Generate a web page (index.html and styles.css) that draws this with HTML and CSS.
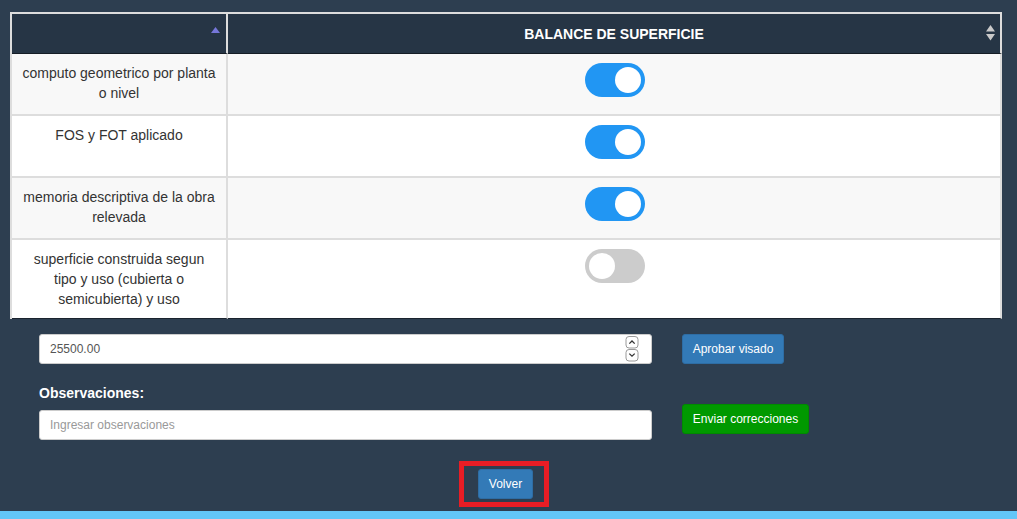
FILE: index.html
```html
<!DOCTYPE html>
<html lang="es">
<head>
<meta charset="utf-8">
<title>Balance de superficie</title>
<link rel="stylesheet" href="styles.css">
</head>
<body>
<div class="page">
  <main class="main">
    <table class="grid">
      <thead>
        <tr>
          <th class="col-item">
            <svg class="sort sort-asc" width="9" height="6" viewBox="0 0 9 6"><path d="M4.5 0 L9 6 L0 6 Z" fill="#7677d9"/></svg>
          </th>
          <th class="col-check">BALANCE DE SUPERFICIE
            <svg class="sort sort-both" width="9" height="16" viewBox="0 0 9 16"><path d="M4.5 0 L9 6.5 L0 6.5 Z M0 9 L9 9 L4.5 15.5 Z" fill="#c9c9c9"/></svg>
          </th>
        </tr>
      </thead>
      <tbody>
        <tr class="odd">
          <td class="item">computo geometrico por planta o nivel</td>
          <td class="check"><label class="switch"><input type="checkbox" checked><span class="slider"></span></label></td>
        </tr>
        <tr>
          <td class="item">FOS y FOT aplicado</td>
          <td class="check"><label class="switch"><input type="checkbox" checked><span class="slider"></span></label></td>
        </tr>
        <tr class="odd">
          <td class="item">memoria descriptiva de la obra relevada</td>
          <td class="check"><label class="switch"><input type="checkbox" checked><span class="slider"></span></label></td>
        </tr>
        <tr class="last">
          <td class="item">superficie construida segun tipo y uso (cubierta o semicubierta) y uso</td>
          <td class="check"><label class="switch"><input type="checkbox"><span class="slider"></span></label></td>
        </tr>
      </tbody>
    </table>

    <div class="form">
      <div class="form-row">
        <div class="field number-field">
          <input class="plain" type="text" value="25500.00">
          <svg class="spinner" width="14" height="26" viewBox="0 0 14 26">
            <rect x="1" y="0.5" width="12" height="11.5" rx="3" fill="#fff" stroke="#9a9a9a"/>
            <path d="M4.3 7.6 L7 5 L9.7 7.6" fill="none" stroke="#333" stroke-width="1.3"/>
            <rect x="1" y="13.5" width="12" height="11.5" rx="3" fill="#fff" stroke="#9a9a9a"/>
            <path d="M4.3 17.6 L7 20.2 L9.7 17.6" fill="none" stroke="#333" stroke-width="1.3"/>
          </svg>
        </div>
        <button class="btn btn-blue btn-approve" type="button">Aprobar visado</button>
      </div>
      <div class="form-row second">
        <div class="obs">
          <label class="obs-label" for="obs">Observaciones:</label>
          <input id="obs" class="field text-field" type="text" placeholder="Ingresar observaciones">
        </div>
        <button class="btn btn-green btn-send" type="button">Enviar correcciones</button>
      </div>
    </div>

    <div class="back">
      <div class="highlight">
        <button class="btn btn-blue btn-back" type="button">Volver</button>
      </div>
    </div>
  </main>
  <div class="footer-bar"></div>
</div>
</body>
</html>
```

FILE: styles.css
```css
* { box-sizing: border-box; }

html, body {
  margin: 0;
  padding: 0;
}

body {
  background: #2d3e50;
  font-family: "Liberation Sans", Arial, sans-serif;
  font-size: 14px;
  color: #333;
}

.page {
  height: 519px;
  display: flex;
  flex-direction: column;
  overflow: hidden;
}

.main {
  flex: 1;
}

/* ---------- table ---------- */
.grid {
  margin: 12px 0 0 10px;
  width: 992px;
  border-collapse: separate;
  border-spacing: 0;
  border-top: 2px solid #dddddd;
  border-left: 2px solid #dddddd;
  table-layout: fixed;
}

.grid th {
  position: relative;
  height: 40px;
  background: #263545;
  color: #fff;
  font-weight: bold;
  font-size: 14px;
  text-align: center;
  padding: 0 8px;
  border-right: 2px solid #dddddd;
  border-bottom: 1px solid #151d26;
}

.grid .col-item { width: 216px; }

.sort {
  position: absolute;
  display: block;
}
.sort-asc { right: 6px; top: 13px; }
.sort-both { right: 5px; top: 11px; }

.grid td {
  background: #fff;
  padding: 9px 9px 9px;
  line-height: 20px;
  text-align: center;
  vertical-align: top;
  border-right: 2px solid #dddddd;
  border-bottom: 2px solid #dddddd;
}

.grid tr.odd td { background: #f8f8f8; }
.grid tr.last td { border-bottom: 1px solid #1a232e; }

.item { color: #333; }

.grid td.check {
  font-size: 0;
  line-height: 0;
  padding: 8px 8px 10px 10px;
}

/* ---------- switch ---------- */
.switch {
  position: relative;
  display: inline-block;
  width: 60px;
  height: 34px;
  margin: 1px 0 7px;
  vertical-align: top;
}

.switch input {
  opacity: 0;
  width: 0;
  height: 0;
  margin: 0;
}

.slider {
  position: absolute;
  inset: 0;
  background: #cccccc;
  border-radius: 34px;
}

.slider::before {
  content: "";
  position: absolute;
  width: 26px;
  height: 26px;
  left: 4px;
  top: 4px;
  background: #fff;
  border-radius: 50%;
}

.switch input:checked + .slider { background: #2196f3; }
.switch input:checked + .slider::before { transform: translateX(26px); }

/* ---------- form ---------- */
.form {
  padding: 15px 0 0 39px;
}

.form-row {
  display: flex;
  align-items: flex-start;
  gap: 30px;
}

.form-row.second {
  margin-top: 19px;
}

.field {
  width: 613px;
  height: 30px;
  background: #fff;
  border: 1px solid #cccccc;
  border-radius: 3px;
  font-family: "Liberation Sans", Arial, sans-serif;
  font-size: 12px;
  color: #555;
}

.number-field {
  display: flex;
  align-items: center;
  padding: 0 12px 0 10px;
}

.plain {
  flex: 1;
  border: 0;
  outline: 0;
  padding: 0;
  font: inherit;
  color: #555;
  background: transparent;
}

.spinner { display: block; flex: none; }

.obs {
  display: flex;
  flex-direction: column;
}

.obs-label {
  color: #fff;
  font-weight: bold;
  font-size: 14px;
  line-height: 20px;
  margin-bottom: 7px;
}

.text-field {
  padding: 0 10px;
  outline: 0;
}

.text-field::placeholder { color: #999; }

.btn {
  border: 1px solid transparent;
  border-radius: 3px;
  color: #fff;
  font-family: "Liberation Sans", Arial, sans-serif;
  font-size: 12px;
  line-height: 18px;
  padding: 5px 0;
  white-space: nowrap;
  text-align: center;
  cursor: pointer;
}

.btn-blue {
  background: #337ab7;
  border-color: #2e6da4;
}

.btn-green {
  background: #009900;
  border-color: #008a00;
}

.btn-approve { width: 102px; height: 30px; }
.btn-send { width: 127px; height: 30px; margin-top: 21px; }

/* ---------- back ---------- */
.back {
  padding: 21px 0 0 459px;
}

.highlight {
  display: inline-block;
  border: 5px solid #e81d25;
  padding: 3px 11px 3px 14px;
}

.btn-back {
  display: block;
  width: 55px;
  height: 30px;
}

.footer-bar {
  height: 8px;
  background: #62c6f7;
}
```
